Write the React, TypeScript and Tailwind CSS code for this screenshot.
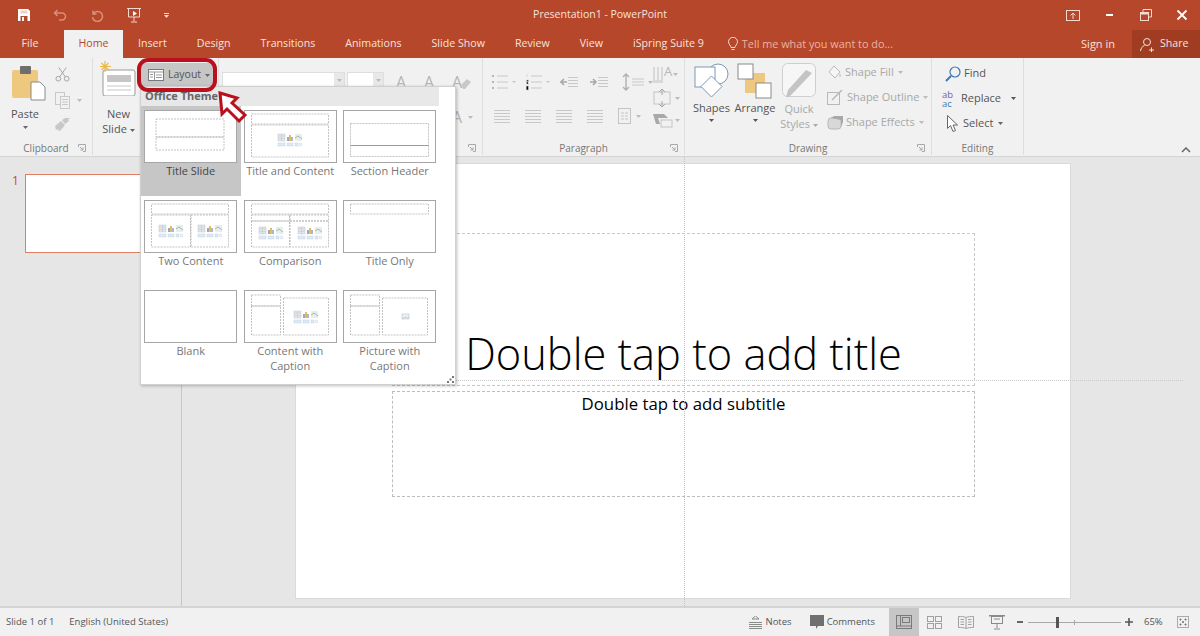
import type { ReactNode } from 'react'

const dash = { fill: 'none', stroke: '#b4b4b4', strokeWidth: 0.8, strokeDasharray: '2 1' }

function Caret({ className = 'text-[#666]' }: { className?: string }) {
  return (
    <svg width="5" height="3" viewBox="0 0 5 3" className={`inline-block shrink-0 ${className}`}>
      <path d="M0 0h5L2.5 3z" fill="currentColor" />
    </svg>
  )
}

function Launcher() {
  return (
    <svg width="8" height="8" viewBox="0 0 8 8" fill="none" stroke="#a8a8a8" strokeWidth="1">
      <path d="M0.5 3V.5h7v7H5M2 3l3 3M5 3.5V6H2.5" />
    </svg>
  )
}

function Lines({ w = 16, n = 4, color = '#c8c8c8' }: { w?: number; n?: number; color?: string }) {
  return (
    <svg width={w} height={n * 3} viewBox={`0 0 ${w} ${n * 3}`} stroke={color}>
      {Array.from({ length: n }).map((_, i) => (
        <path key={i} d={`M0 ${i * 3 + 1.5}H${w}`} />
      ))}
    </svg>
  )
}

function Bullets({ numbered = false }: { numbered?: boolean }) {
  return (
    <svg width="26" height="18" viewBox="0 0 26 18" stroke="#c8c8c8">
      {[3, 9, 15].map((y) => (
        <g key={y}>
          <rect x="1" y={y - 1} width="2" height="2" fill={numbered ? 'none' : '#b5b5b5'} stroke="none" />
          <path d={`M6 ${y}H17`} />
        </g>
      ))}
      {numbered && <path d="M2 1v3M1.500 7h2v1.500h-2V11h2M1.500 13h2v4h-2" strokeWidth=".7" />}
      <path d="M21 8h4l-2 2z" fill="#c4c4c4" stroke="none" />
    </svg>
  )
}

function Indent({ flip = false }: { flip?: boolean }) {
  return (
    <svg width="18" height="12" viewBox="0 0 18 12" stroke="#c8c8c8">
      <path d="M8 1.500H18M8 4.500H18M8 7.500H18M8 10.500H18" />
      <path d={flip ? 'M0 6h5M3 3l3 3-3 3' : 'M1 6h6M4 3L1 6l3 3'} stroke="#a8a8a8" strokeWidth="1.600" fill="none" />
    </svg>
  )
}

// little table/chart/picture cluster that sits in content placeholders
function MiniContent({ x, y }: { x: number; y: number }) {
  return (
    <g transform={`translate(${x} ${y})`}>
      <rect x="0" y="0" width="7" height="7" fill="#e4e8ec" stroke="#b4bcc4" strokeWidth=".4" />
      <path d="M0 2h7M0 4.500h7M3.500 0v7" stroke="#b4bcc4" strokeWidth=".4" />
      <rect x="9" y="3" width="2" height="4" fill="#9aa8b8" />
      <rect x="11" y="1" width="2" height="6" fill="#e3bb62" />
      <rect x="13" y="3" width="2" height="4" fill="#a8b8c8" />
      <rect x="17" y="0" width="7" height="7" fill="#e8eef0" />
      <path d="M17 4l3-2 4 3" stroke="#7aa880" strokeWidth=".7" fill="none" />
      <rect x="0" y="9" width="7" height="3" fill="#dfeaf4" stroke="#b8cde0" strokeWidth=".4" />
      <rect x="9" y="9" width="6" height="3" fill="#dfeaf4" stroke="#b8cde0" strokeWidth=".4" />
      <rect x="17" y="9" width="3" height="3" fill="#dfeaf4" stroke="#b8cde0" strokeWidth=".4" />
      <circle cx="22.500" cy="10.500" r="1.400" fill="#eef3f7" stroke="#b8cde0" strokeWidth=".4" />
    </g>
  )
}

function Thumb({ children }: { children?: ReactNode }) {
  return (
    <svg width="93" height="53" viewBox="0 0 93 53" className="block bg-white shrink-0">
      <rect x=".5" y=".5" width="92" height="52" fill="#fff" stroke="#a6a6a6" />
      {children}
    </svg>
  )
}

const layouts: { label: string[]; art: ReactNode; active?: boolean }[] = [
  {
    label: ['Title Slide'],
    active: true,
    art: (
      <>
        <rect x="12" y="9" width="68" height="18" {...dash} />
        <rect x="12" y="27" width="68" height="13" {...dash} />
      </>
    ),
  },
  {
    label: ['Title and Content'],
    art: (
      <>
        <rect x="7.500" y="4" width="77" height="10" {...dash} />
        <rect x="7.500" y="15" width="77" height="32" {...dash} />
        <MiniContent x={34} y={24} />
      </>
    ),
  },
  {
    label: ['Section Header'],
    art: (
      <>
        <rect x="7.500" y="13.500" width="78" height="22" {...dash} />
        <rect x="7.500" y="35.500" width="78" height="11" {...dash} />
        <path d="M7.500 35.500h78" stroke="#8a8a8a" strokeWidth=".7" />
      </>
    ),
  },
  {
    label: ['Two Content'],
    art: (
      <>
        <rect x="7.500" y="4" width="77" height="10" {...dash} />
        <rect x="7.500" y="15" width="39" height="32" {...dash} />
        <rect x="47" y="15" width="37.500" height="32" {...dash} />
        <MiniContent x={15} y={25} />
        <MiniContent x={54} y={25} />
      </>
    ),
  },
  {
    label: ['Comparison'],
    art: (
      <>
        <rect x="7.500" y="4" width="77" height="10" {...dash} />
        <rect x="7.500" y="15" width="38" height="6" {...dash} />
        <rect x="46" y="15" width="38.500" height="6" {...dash} />
        <rect x="7.500" y="21" width="38" height="26" {...dash} />
        <rect x="46" y="21" width="38.500" height="26" {...dash} />
        <MiniContent x={15} y={27} />
        <MiniContent x={54} y={27} />
      </>
    ),
  },
  {
    label: ['Title Only'],
    art: <rect x="7.500" y="4" width="78" height="10" {...dash} />,
  },
  { label: ['Blank'], art: null },
  {
    label: ['Content with', 'Caption'],
    art: (
      <>
        <rect x="7.500" y="5" width="29" height="11" {...dash} />
        <rect x="7.500" y="16" width="29" height="29" {...dash} />
        <rect x="39.500" y="8" width="45" height="37" {...dash} />
        <MiniContent x={50} y={21} />
      </>
    ),
  },
  {
    label: ['Picture with', 'Caption'],
    art: (
      <>
        <rect x="7.500" y="5" width="29" height="11" {...dash} />
        <rect x="7.500" y="16" width="29" height="29" {...dash} />
        <rect x="39.500" y="8" width="45" height="37" {...dash} />
        <rect x="59" y="24" width="7" height="5" fill="#eef1f4" stroke="#b0b8c0" strokeWidth=".5" />
        <path d="M59 29l3-2 2 1 2-1" stroke="#9fb6cc" strokeWidth=".6" fill="none" />
      </>
    ),
  },
]

function Group({
  label,
  launcher,
  className,
  children,
}: {
  label?: string
  launcher?: boolean
  className: string
  children: ReactNode
}) {
  return (
    <div className={`flex flex-col h-[97px] shrink-0 border-r border-[#dedede] ${className}`}>
      <div className="flex-1 min-h-0 flex">{children}</div>
      <div className="relative h-[14px] leading-[14px] text-center text-[10px] text-[#777]">
        {label}
        {launcher && (
          <span className="absolute right-[6px] top-[3px] flex">
            <Launcher />
          </span>
        )}
      </div>
    </div>
  )
}

function TabItem({ label }: { label: string }) {
  return <span className="px-[15px] text-[#f6e3dd]">{label}</span>
}

export default function App() {
  return (
    <div className="relative w-[1200px] h-[636px] overflow-hidden flex flex-col bg-[#e6e6e6] font-['Open_Sans',sans-serif] text-[#555]">
      {/* Title bar */}
      <div className="relative h-[30px] bg-[#b7472a] flex items-center shrink-0">
        <div className="flex items-center pl-[18px] gap-[23px]">
          <svg width="12" height="12" viewBox="0 0 12 12">
            <path d="M0 0h10l2 2v10H0z" fill="#fff" />
            <path d="M2.500 1.500h7v3h-7z" fill="#f0cfc4" />
            <path d="M2.500 7h7v5h-7z" fill="#b7472a" />
            <path d="M4 8h2v4H4z" fill="#fff" />
          </svg>
          <svg width="14" height="14" viewBox="0 0 14 14" fill="none" stroke="#d9907b" strokeWidth="1.500">
            <path d="M1.500 5H9a3.500 3.500 0 0 1 0 7H6M4.500 2l-3 3 3 3" />
          </svg>
          <svg width="14" height="14" viewBox="0 0 14 14" fill="none" stroke="#d9907b" strokeWidth="1.500">
            <path d="M3 2.500V6h3.500M3.200 5.800A5 5 0 1 1 2.500 9" />
          </svg>
          <svg width="15" height="16" viewBox="0 0 15 16" fill="none" stroke="#f3d9d0" strokeWidth="1">
            <path d="M0 1.500h14M1.500 2v8h11V2M7 10v4M4 15h6" />
            <path d="M6 4l4 2.500L6 9z" fill="#fff" stroke="none" />
          </svg>
          <span className="flex flex-col items-center gap-[1px] -ml-[1px]">
            <span className="block w-[5px] h-[1px] bg-[#f3d9d0]" />
            <Caret className="text-[#f3d9d0]" />
          </span>
        </div>
        <span className="absolute left-0 right-0 text-center text-[10.5px] text-[#f6e3dd] pointer-events-none">
          Presentation1 - PowerPoint
        </span>
        <div className="ml-auto flex items-center h-full">
          <span className="w-[36px] flex justify-center">
            <svg width="14" height="11" viewBox="0 0 14 11" fill="none" stroke="#f3d9d0">
              <rect x=".5" y=".5" width="13" height="10" />
              <path d="M7 9V3.500M4.500 5.500L7 3l2.500 2.500" />
            </svg>
          </span>
          <span className="w-[37px] flex justify-center">
            <span className="block w-[7px] h-[2px] bg-white" />
          </span>
          <span className="w-[36px] flex justify-center">
            <svg width="12" height="12" viewBox="0 0 12 12" fill="none" stroke="#f3d9d0">
              <rect x=".5" y="3.500" width="8" height="8" />
              <path d="M3 3V.5h8.500V8H9" />
              <path d="M1 4.500h7" strokeWidth="2" />
            </svg>
          </span>
          <span className="w-[36px] flex justify-center">
            <svg width="14" height="14" viewBox="0 0 14 14" stroke="#fff" strokeWidth="1.800">
              <path d="M2.500 2.500l9 9M11.500 2.500l-9 9" />
            </svg>
          </span>
        </div>
      </div>

      {/* Tabs */}
      <div className="h-[28px] bg-[#b7472a] flex items-center text-[10.65px] shrink-0">
        <span className="w-[60px] text-center text-[#f6e3dd]">File</span>
        <span className="ml-[4px] w-[59px] h-full bg-[#f1f1f1] flex items-center justify-center text-[#b7472a]">Home</span>
        <TabItem label="Insert" />
        <TabItem label="Design" />
        <TabItem label="Transitions" />
        <TabItem label="Animations" />
        <TabItem label="Slide Show" />
        <TabItem label="Review" />
        <TabItem label="View" />
        <TabItem label="iSpring Suite 9" />
        <span className="flex items-center gap-[4px] ml-[9px] text-[10.85px] text-[#e9b3a2]">
          <svg width="10" height="14" viewBox="0 0 10 14" fill="none" stroke="#f3d9d0">
            <path d="M3 10.500C3 8.500.5 7.500.5 4.800a4.500 4.500 0 0 1 9 0C9.500 7.500 7 8.500 7 10.500zM3.500 12.500h3" />
          </svg>
          Tell me what you want to do...
        </span>
        <span className="ml-auto text-[#f6e3dd] text-[11px] mr-[17px]">Sign in</span>
        <span className="w-[68px] h-full bg-[#9f3c22] flex items-center gap-[5px] pl-[8px] text-[#f6e3dd]">
          <svg width="15" height="15" viewBox="0 0 15 15" fill="none" stroke="#f6e3dd">
            <circle cx="7" cy="5" r="3.500" />
            <path d="M.5 14c.5-3 2-5 4-5.500M9 13h5M11.500 10.500v5" />
          </svg>
          Share
        </span>
      </div>

      {/* Ribbon */}
      <div className="relative h-[99px] shrink-0 bg-[#f1f1f1] border-b border-[#d4d4d4] flex items-start text-[11px]">
        <Group label="Clipboard" launcher className="w-[93px]">
          <div className="w-[50px] flex flex-col items-center pt-[8px]">
            <svg width="34" height="35" viewBox="0 0 34 35" className="ml-[7px]">
              <rect x="0" y="4" width="26" height="28" rx="2" fill="#edc87e" />
              <rect x="8" y="0" width="11" height="8" rx="1" fill="#6e6e6e" />
              <path d="M19 16h9l5 5v13H19z" fill="#fff" stroke="#8a8a8a" />
            </svg>
            <span className="mt-[6px] leading-[14px]">Paste</span>
            <span className="mt-[5px] flex"><Caret /></span>
          </div>
          <div className="flex flex-col items-start pl-[5px] pt-[8px] gap-[9px]">
            <svg width="15" height="17" viewBox="0 0 16 17" fill="none" stroke="#a0a0a0">
              <circle cx="3.500" cy="13" r="2.500" />
              <circle cx="12.500" cy="13" r="2.500" />
              <path d="M5 11L12 1M11 11L4 1" />
            </svg>
            <span className="flex items-center gap-[7px]">
              <svg width="15" height="17" viewBox="0 0 15 17" fill="#f1f1f1" stroke="#c8c8c8">
                <rect x=".5" y=".5" width="9" height="12" />
                <rect x="5.500" y="4.500" width="9" height="12" />
                <path d="M7 7.500h6M7 10h6M7 12.500h6" />
              </svg>
              <Caret className="text-[#bbb]" />
            </span>
            <svg width="16" height="13" viewBox="0 0 16 13" fill="#c8c8c8">
              <path d="M0 8l6-5 4 4-5 6H3l1-2-3 1zM7 2l3-2 5 0-2 2 1 1-4 3z" />
            </svg>
          </div>
        </Group>

        <Group className="w-[126px]">
          <div className="w-[47px] flex flex-col items-center pt-[3px] pl-[4px]">
            <svg width="36" height="35" viewBox="0 0 36 35" className="-ml-[2px]">
              <rect x="3" y="9" width="32" height="26" rx="2" fill="#fff" stroke="#9a9a9a" />
              <rect x="7" y="14" width="24" height="7" fill="#c6c6c6" />
              <path d="M7 25h24M7 29h24" stroke="#c6c6c6" />
              <path d="M5 0v11M0 5.500h11M1.500 2l7 7M8.500 2l-7 7" stroke="#e9b949" strokeWidth="1.200" />
            </svg>
            <span className="mt-[10px] leading-[15px] text-center">
              New
              <br />
              Slide <Caret />
            </span>
          </div>
          <div className="ml-[1px] mt-[5px] w-[72px] h-[24px] bg-[#c6c6c6] flex items-center pl-[7px] gap-[4px]">
            <svg width="16" height="12" viewBox="0 0 16 12" fill="#fff" stroke="#777">
              <rect x=".5" y=".5" width="15" height="11" />
              <path d="M.5 3h15M6.500 3v8.500M2 5.500h3M2 8h3M8 6h6M8 8.500h6" stroke="#999" />
            </svg>
            <span className="text-[10.5px]">Layout</span>
            <Caret />
          </div>
        </Group>

        <Group label="Font" launcher className="w-[264px]">
          <div className="flex flex-col pl-[3px] pt-[14px]">
            <div className="flex gap-[2px]">
              <span className="w-[123px] h-[16px] bg-white border border-[#dedede] flex items-center justify-end">
                <span className="w-[10px] h-full bg-[#e8e8e8] flex items-center justify-center"><Caret className="text-[#bbb]" /></span>
              </span>
              <span className="w-[37px] h-[16px] bg-white border border-[#dedede] flex items-center justify-end">
                <span className="w-[10px] h-full bg-[#e8e8e8] flex items-center justify-center"><Caret className="text-[#bbb]" /></span>
              </span>
            </div>
          </div>
          <div className="flex flex-col pl-[12px] pt-[15px] gap-[17px] text-[16px] leading-[18px] text-[#b5b5b5]">
            <div className="flex items-center">
              <span className="w-[28px]">A</span>
              <span className="w-[28px]">A</span>
              <span>A</span>
              <svg width="10" height="10" viewBox="0 0 10 10" fill="#c8c8c8" className="ml-[-1px] mt-[4px]">
                <path d="M0 6l6-6 4 3-6 7H2z" />
              </svg>
            </div>
            <div className="flex items-center ml-[56px] gap-[6px]">
              <span>A</span>
              <Caret className="text-[#bbb]" />
            </div>
          </div>
        </Group>

        <Group label="Paragraph" launcher className="w-[202px]">
          <div className="flex flex-col pl-[8px] pt-[15px] gap-[18px] w-[170px]">
            <div className="flex items-center h-[18px]">
              <Bullets />
              <span className="ml-[8px] flex"><Bullets numbered /></span>
              <span className="ml-[9px] flex"><Indent /></span>
              <span className="ml-[12px] flex"><Indent flip /></span>
              <span className="ml-[14px] flex items-center gap-[2px]">
                <svg width="24" height="20" viewBox="0 0 24 20" stroke="#b0b0b0" fill="none">
                  <path d="M4 2v16M1 5l3-3 3 3M1 15l3 3 3-3" strokeWidth="1.400" />
                  <path d="M10 7h12M10 10h12M10 13h12" stroke="#c8c8c8" />
                </svg>
                <Caret className="text-[#bbb]" />
              </span>
            </div>
            <div className="flex items-center gap-[15px] h-[14px] pl-[3px]">
              <Lines w={16} n={5} />
              <Lines w={16} n={5} />
              <Lines w={16} n={5} />
              <Lines w={16} n={5} />
              <span className="flex items-center gap-[5px]">
                <svg width="13" height="16" viewBox="0 0 13 16" fill="none" stroke="#c4c4c4">
                  <rect x=".5" y=".5" width="12" height="15" />
                  <path d="M3 5h3M7 5h3M3 8h3M7 8h3M3 11h3M7 11h3" />
                </svg>
                <Caret className="text-[#bbb]" />
              </span>
            </div>
          </div>
          <div className="flex flex-col pt-[6px] gap-[3px] items-start">
            <span className="flex items-center h-[20px]">
              <svg width="11" height="20" viewBox="0 0 11 20" stroke="#c0c0c0" fill="none">
                <path d="M1 3v16M5 3v16M9 3v16M3 19v-3M7 19v-3" />
              </svg>
              <span className="text-[13px] leading-[16px] -mt-[6px] text-[#b8b8b8]">A</span>
              <Caret className="text-[#bbb] ml-[1px]" />
            </span>
            <span className="flex items-center gap-[2px] mt-[2px]">
              <svg width="20" height="18" viewBox="0 0 20 18" stroke="#c4c4c4" fill="none">
                <rect x="1" y="3" width="16" height="12" />
                <path d="M9 0v6M6 3l3-3 3 3M9 18v-6M6 15l3 3 3-3" stroke="#a8a8a8" />
              </svg>
              <Caret className="text-[#bbb]" />
            </span>
            <span className="flex items-center gap-[2px] mt-[3px]">
              <svg width="20" height="15" viewBox="0 0 20 15">
                <path d="M0 1h11l4 4H5l2 6H3z" fill="#a8a8a8" />
                <rect x="8" y="7" width="11" height="7" fill="#f1f1f1" stroke="#c4c4c4" />
              </svg>
              <Caret className="text-[#bbb]" />
            </span>
          </div>
        </Group>

        <Group label="Drawing" launcher className="w-[247px]">
          <div className="w-[52px] flex flex-col items-center pt-[5px] pl-[1px]">
            <svg width="36" height="36" viewBox="0 0 36 36" fill="#fff" stroke="#7f97b2">
              <circle cx="24" cy="11" r="10" />
              <rect x="1" y="4" width="20" height="20" />
              <path d="M17.500 13l10.500 10.500L17.500 34 7 23.500z" />
            </svg>
            <span className="mt-[2px] leading-[14px]">Shapes</span>
            <span className="mt-[4px] flex"><Caret className="text-[#555]" /></span>
          </div>
          <div className="w-[36px] flex flex-col items-center pt-[5px]">
            <svg width="36" height="36" viewBox="0 0 36 36">
              <rect x="8" y="10" width="20" height="20" fill="#edc87e" />
              <rect x="1" y="1" width="15" height="15" fill="#fff" stroke="#8a8a8a" />
              <rect x="19" y="20" width="15" height="15" fill="#fff" stroke="#8a8a8a" />
            </svg>
            <span className="mt-[2px] leading-[14px]">Arrange</span>
            <span className="mt-[4px] flex"><Caret className="text-[#555]" /></span>
          </div>
          <div className="w-[52px] flex flex-col items-center pt-[5px] text-[#a8a8a8]">
            <svg width="34" height="36" viewBox="0 0 34 36">
              <rect x=".5" y=".5" width="33" height="33" rx="5" fill="#f6f6f6" stroke="#cfcfcf" />
              <path d="M30 10L13 28l-6 6H4l2-7 18-20z" fill="#c4c4c4" />
            </svg>
            <span className="mt-[2px] leading-[15px] text-center">
              Quick
              <br />
              Styles <Caret className="text-[#aaa]" />
            </span>
          </div>
          <div className="flex flex-col pl-[2px] pt-[5px] gap-[6px] text-[#a8a8a8]">
            <span className="flex items-center gap-[3px] h-[19px]">
              <svg width="15" height="15" viewBox="0 0 15 15" fill="#f6f6f6" stroke="#b8b8b8">
                <path d="M7 1l6 6-5 6-6-6zM13 9v3" />
              </svg>
              Shape Fill <Caret className="text-[#bbb] ml-[1px]" />
            </span>
            <span className="flex items-center gap-[3px] h-[19px]">
              <svg width="17" height="15" viewBox="0 0 17 15" fill="none" stroke="#b8b8b8">
                <rect x=".5" y="2.500" width="12" height="12" />
                <path d="M5 10L15 0" strokeWidth="1.500" />
              </svg>
              Shape Outline <Caret className="text-[#bbb] ml-[1px]" />
            </span>
            <span className="flex items-center gap-[3px] h-[19px]">
              <svg width="16" height="14" viewBox="0 0 16 14">
                <rect x="1" y="2" width="13" height="11" rx="3" fill="#d8d8d8" stroke="#b8b8b8" />
                <path d="M4 2l3-2h9v6l-2 5V4z" fill="#a8a8a8" />
              </svg>
              Shape Effects <Caret className="text-[#bbb] ml-[1px]" />
            </span>
          </div>
        </Group>

        <Group label="Editing" className="w-[92px]">
          <div className="flex flex-col pl-[10px] pt-[6px] gap-[6px]">
            <span className="flex items-center gap-[3px] h-[19px] pl-[3px]">
              <svg width="16" height="16" viewBox="0 0 16 16" fill="none" stroke="#3f78b0">
                <circle cx="10" cy="6" r="5" strokeWidth="1.200" />
                <path d="M6 10l-5 5" strokeWidth="2" />
              </svg>
              Find
            </span>
            <span className="flex items-center h-[19px]">
              <span className="w-[19px] text-[9.5px] leading-[9px] text-[#7a5aa5]">
                ab
                <br />
                <span className="text-[#3f78b0]">ac</span>
              </span>
              Replace
              <Caret className="ml-[10px]" />
            </span>
            <span className="flex items-center gap-[5px] h-[19px] pl-[5px]">
              <svg width="11" height="18" viewBox="0 0 11 18" fill="#fff" stroke="#666">
                <path d="M.5.500v13l3-3 2.500 6 2.500-1-2.500-5.500h4.500z" />
              </svg>
              Select <Caret />
            </span>
          </div>
        </Group>

        <svg width="10" height="6" viewBox="0 0 10 6" fill="none" stroke="#666" strokeWidth="1.500" className="absolute right-[9px] bottom-[3px]">
          <path d="M1 5l4-4 4 4" />
        </svg>
      </div>

      {/* Slide pane and editor */}
      <div className="flex-1 min-h-0 flex">
        <div className="w-[182px] shrink-0 border-r border-[#c6c6c6] flex items-start pt-[17px]">
          <span className="w-[25px] pl-[12px] text-[12px] leading-[14px] text-[#d24726]">1</span>
          <div className="w-[140px] h-[79px] bg-white border border-[#de7e62]" />
        </div>
        <div className="flex-1 pl-[113px] pt-[6px]">
          <div className="w-[776px] h-[436px] bg-white border border-[#dadada] pl-[96px] pt-[69px]">
            <div className="w-[583px] h-[153px] border border-dashed border-[#c8c8c8] flex items-end justify-center font-light text-[43.4px] leading-[50px] text-black pb-[6px]">
              Double tap to add title
            </div>
            <div className="mt-[5px] w-[583px] h-[106px] border border-dashed border-[#bdbdbd] text-center text-[16.8px] leading-[24px] text-black">
              Double tap to add subtitle
            </div>
          </div>
        </div>
      </div>

      {/* Status bar */}
      <div className="h-[30px] shrink-0 bg-[#f1f1f1] border-t-2 border-[#d4d4d4] flex items-center text-[9.5px] text-[#555]">
        <span className="pl-[6px]">Slide 1 of 1</span>
        <span className="ml-[15px]">English (United States)</span>
        <span className="ml-auto flex items-center gap-[4px]">
          <svg width="13" height="13" viewBox="0 0 13 13" stroke="#8a8a8a" fill="none">
            <path d="M0 6.500h13M0 8.500h13M0 10.500h13M0 12.500h13M3 3l3.500-3L10 3z" />
          </svg>
          Notes
        </span>
        <span className="ml-[18px] flex items-center gap-[3px]">
          <svg width="14" height="14" viewBox="0 0 14 14" fill="#707070">
            <path d="M0 0h14v11H8l-2 3v-3H0z" />
          </svg>
          Comments
        </span>
        <span className="ml-[14px] w-[30px] h-full bg-[#c6c6c6] flex items-center justify-center">
          <svg width="16" height="14" viewBox="0 0 16 14" fill="none" stroke="#7a7a7a">
            <rect x=".5" y=".5" width="15" height="13" />
            <path d="M.5 11h15M4.500 .5v10.500" />
            <rect x="6.500" y="2.500" width="7" height="5" />
          </svg>
        </span>
        <span className="w-[31px] flex justify-center">
          <svg width="15" height="13" viewBox="0 0 15 13" fill="none" stroke="#a0a0a0">
            <rect x=".5" y=".5" width="6" height="5" />
            <rect x="8.500" y=".5" width="6" height="5" />
            <rect x=".5" y="7.500" width="6" height="5" />
            <rect x="8.500" y="7.500" width="6" height="5" />
          </svg>
        </span>
        <span className="w-[31px] flex justify-center">
          <svg width="16" height="13" viewBox="0 0 16 13" fill="none" stroke="#a0a0a0">
            <path d="M8 1.500C6 .5 3 .5.500.500v11c2.500 0 5.500 0 7.500 1 2-1 5-1 7.500-1V.5C13 .5 10 .5 8 1.500zM8 1.500v11M2.500 3.500h3.500M2.500 6h3.500M2.500 8.500h3.500M10 3.500h3.500M10 6h3.500M10 8.500h3.500" />
          </svg>
        </span>
        <span className="w-[31px] flex justify-center">
          <svg width="16" height="15" viewBox="0 0 16 15" fill="none" stroke="#8a8a8a">
            <path d="M0 .5h16" strokeWidth="2" />
            <rect x="2.500" y="1.500" width="11" height="7" />
            <path d="M8 8.500v4.500M5 14h6M5 4h6" />
          </svg>
        </span>
        <span className="ml-[5px] w-[6px] h-[2px] bg-[#666]" />
        <span className="ml-[5px] relative w-[93px] h-[1px] bg-[#a8a8a8] flex justify-center items-center">
          <span className="block w-[1px] h-[5px] bg-[#a8a8a8]" />
          <span className="absolute left-[28px] -top-[5px] w-[3px] h-[11px] bg-[#555]" />
        </span>
        <svg width="8" height="8" viewBox="0 0 8 8" stroke="#555" strokeWidth="1.600" className="ml-[4px]">
          <path d="M0 4h8M4 0v8" />
        </svg>
        <span className="ml-[11px] w-[24px]">65%</span>
        <span className="ml-[9px] mr-[11px]">
          <svg width="12" height="12" viewBox="0 0 12 12" stroke="#aaa" fill="none">
            <rect x=".5" y=".5" width="11" height="11" />
            <path d="M3 3h1v1H3zM8 3h1v1H8zM3 8h1v1H3zM8 8h1v1H8zM5.500 5.500h1v1h-1z" fill="#777" stroke="#777" />
          </svg>
        </span>
      </div>

      {/* Ruler guides over the editor */}
      <div className="absolute left-[684px] top-[157px] h-[449px] border-l border-dotted border-[#c0c0c0] pointer-events-none" />
      <div className="absolute left-[182px] top-[380px] w-[1001px] border-t border-dotted border-[#c8c8c8] pointer-events-none" />

      {/* Layout gallery */}
      <div className="absolute left-[140px] top-[86px] w-[316px] h-[299px] bg-white border border-[#d0d0d0] shadow-[1px_1px_3px_rgba(0,0,0,0.25)] text-[11px] text-[#777]">
        <div className="h-[19px] w-[298px] bg-[#e8e8e8] flex items-center pl-[4px] font-bold text-[#666]">Office Theme</div>
        <div className="grid grid-cols-[repeat(3,99.5px)] auto-rows-[90px]">
          {layouts.map((l) => (
            <div key={l.label[0]} className={`flex flex-col items-center pt-[4px] ${l.active ? 'bg-[#c6c6c6] text-[#444]' : ''}`}>
              <Thumb>{l.art}</Thumb>
              <div className="text-center leading-[15px]">
                {l.label.map((t) => (
                  <div key={t}>{t}</div>
                ))}
              </div>
            </div>
          ))}
        </div>
        <span className="absolute right-[1px] bottom-[1px] flex">
          <svg width="7" height="7" viewBox="0 0 7 7" fill="#777">
            <path d="M5 0h2v2H5zM5 5h2v2H5zM0 5h2v2H0zM2.500 2.500h2v2h-2z" />
          </svg>
        </span>
      </div>

      {/* Red highlight and arrow on the Layout button */}
      <div className="absolute left-[137px] top-[58px] w-[80px] h-[34px] rounded-[11px] border-4 border-[#b8101c] pointer-events-none" />
      <svg width="40" height="40" viewBox="0 0 40 40" className="absolute left-[215px] top-[88px] pointer-events-none">
        <path d="M5 5l17 5-5 5 13 12-6 6-12-12-5 5z" fill="#fff" stroke="#b8101c" strokeWidth="3" />
      </svg>
    </div>
  )
}
